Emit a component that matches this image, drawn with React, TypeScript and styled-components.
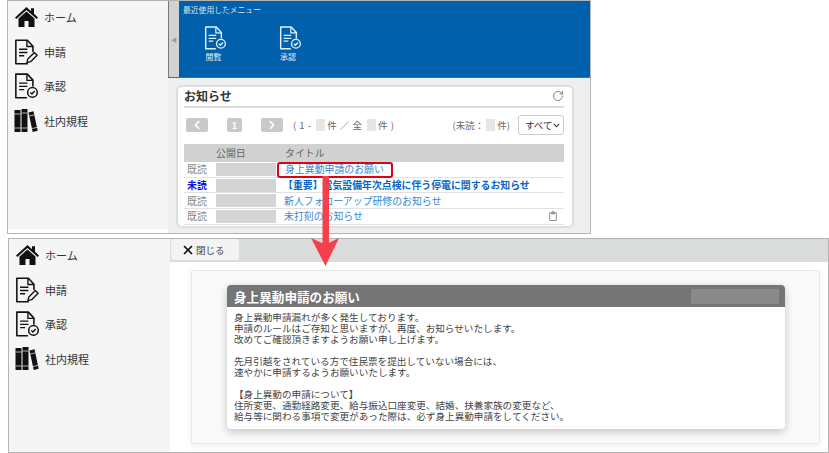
import React from "react";
import styled, { createGlobalStyle } from "styled-components";
import { FaChevronLeft, FaChevronRight, FaChevronDown, FaRegClipboard } from "react-icons/fa";
import { RotateCw, X } from "lucide-react";

const GlobalStyle = createGlobalStyle`
  html, body {
    margin: 0;
    padding: 0;
    background: #fff;
    font-family: "Noto Sans CJK JP", "Liberation Sans", sans-serif;
    color: #444;
  }
  * { box-sizing: border-box; }
`;

const Page = styled.div`
  position: relative;
  width: 829px;
  height: 453px;
  overflow: hidden;
  display: flex;
  flex-direction: column;
  gap: 4px;
`;

const Frame = styled.div<{ $w: number; $h: number; $left: number }>`
  display: flex;
  width: ${(p) => p.$w}px;
  height: ${(p) => p.$h}px;
  margin-left: ${(p) => p.$left}px;
  border: 1px solid #b4b4b4;
  flex-shrink: 0;
`;

const Sidebar = styled.nav<{ $w: number; $bottomGap: number }>`
  width: ${(p) => p.$w}px;
  flex-shrink: 0;
  background: #f5f5f5;
  padding: 0 0 0 6px;
  margin-bottom: ${(p) => p.$bottomGap}px;
  display: flex;
  flex-direction: column;
`;

const NavItem = styled.div`
  height: 34.7px;
  padding-bottom: 3px;
  display: flex;
  align-items: center;
  gap: 6px;
  font-size: 11px;
  color: #333;
`;

const NavIcon = styled.div`
  width: 24px;
  height: 26px;
  display: flex;
  align-items: center;
  justify-content: center;
  color: #111;
  flex-shrink: 0;
`;

const TopMain = styled.div`
  flex: 1;
  background: #efefef;
  display: flex;
  flex-direction: column;
`;

const Strip = styled.div`
  height: 77px;
  display: flex;
  border-bottom: 1px solid #666;
`;

const Collapse = styled.div`
  width: 11px;
  background: #d2d2d2;
  border-left: 1px solid #777;
  display: flex;
  align-items: center;
  justify-content: center;
  color: #9a9a9a;
  font-size: 6px;
`;

const BluePanel = styled.div`
  flex: 1;
  background: #0060ac;
  color: #d6e6f4;
  padding: 3px 0 0 4px;
`;

const PanelTitle = styled.div`
  font-size: 7.8px;
  line-height: 11px;
`;

const Shortcuts = styled.div`
  display: flex;
  margin-top: 11px;
  padding-left: 21px;
  gap: 52.5px;
`;

const Shortcut = styled.div`
  width: 22px;
  display: flex;
  flex-direction: column;
  align-items: center;
  color: #e6eff7;
  font-size: 8px;
  line-height: 10px;
  gap: 2px;
`;

const ShortcutLabel = styled.span`
  margin-left: -3px;
  white-space: nowrap;
`;

const Card = styled.section`
  margin: 7px 16px 0 8px;
  height: 143px;
  background: #fff;
  border: 2px solid #dedede;
  border-radius: 6px;
  padding: 0 8px 0 6px;
`;

const CardHead = styled.div`
  height: 21px;
  padding: 0 0 2px 0;
  display: flex;
  align-items: center;
  justify-content: space-between;
  border-bottom: 2px solid #dcdcdc;
  color: #666;
`;

const CardTitle = styled.h2`
  margin: 0;
  font-size: 12px;
  font-weight: 700;
  color: #333;
`;

const Pager = styled.div`
  height: 36px;
  display: flex;
  align-items: center;
  padding: 0 0 2px 2px;
  font-size: 9.5px;
  color: #666;
`;

const PageButton = styled.div<{ $w: number; $gap: number }>`
  width: ${(p) => p.$w}px;
  height: 14px;
  margin-right: ${(p) => p.$gap}px;
  border-radius: 2px;
  background: #c9c9c9;
  color: #fff;
  font-size: 9px;
  font-weight: 700;
  display: flex;
  align-items: center;
  justify-content: center;
`;

const Blank = styled.span`
  display: inline-block;
  width: 9px;
  height: 12px;
  margin: 0 2px;
  vertical-align: -2px;
  background: #e6e6e6;
`;

const PageCount = styled.div`
  flex: 1;
  white-space: pre;
  word-spacing: 1px;
`;

const Select = styled.div`
  width: 46px;
  height: 20px;
  margin-left: 8px;
  border: 1px solid #ccc;
  border-radius: 3px;
  display: flex;
  align-items: center;
  justify-content: space-between;
  padding: 0 3px 0 6px;
  font-size: 9.5px;
  color: #333;
`;

const TableRow = styled.div<{ $head?: boolean }>`
  display: grid;
  grid-template-columns: 32px 60px 1fr;
  height: ${(p) => (p.$head ? 18 : 15.7)}px;
  align-items: center;
  font-size: 9.9px;
  background: ${(p) => (p.$head ? "#d1d1d1" : "#fff")};
  color: #666;
  border-bottom: ${(p) => (p.$head ? "none" : "1px solid #e2e2e2")};
  position: relative;
`;

const Status = styled.span<{ $unread?: boolean }>`
  padding-left: 3px;
  color: ${(p) => (p.$unread ? "#1414d8" : "#8a8a8a")};
  font-weight: ${(p) => (p.$unread ? 700 : 400)};
`;

const DateBar = styled.span`
  height: 13px;
  background: #d4d4d4;
`;

const ColumnTitle = styled.span`
  padding-left: 9px;
`;

const TitleLink = styled.a<{ $bold?: boolean; $shift: number }>`
  padding-left: ${(p) => p.$shift}px;
  color: ${(p) => (p.$bold ? "#0a63c4" : "#3a86cf")};
  font-weight: ${(p) => (p.$bold ? 700 : 400)};
  white-space: nowrap;
`;

const Trash = styled.div`
  position: absolute;
  right: 6px;
  top: 2px;
  color: #8c8c8c;
  font-size: 10px;
  line-height: 10px;
`;

const BottomMain = styled.div`
  flex: 1;
  display: flex;
  flex-direction: column;
  background: #fff;
`;

const TabBar = styled.div`
  height: 23px;
  background: #dadcdc;
  flex-shrink: 0;
`;

const CloseTab = styled.div`
  width: 68px;
  height: 21px;
  margin-left: 1px;
  background: #f3f3f3;
  border-radius: 2px;
  display: flex;
  align-items: center;
  gap: 1px;
  padding-left: 10px;
  font-size: 9.5px;
  color: #444;
`;

const Outer = styled.div`
  margin: 8px 8px 0 21px;
  height: 174px;
  background: #fafafa;
  border: 1px solid #e8e8e8;
  border-radius: 2px;
  box-shadow: 0 3px 8px rgba(0, 0, 0, 0.06);
  padding: 14px 34px 0 35px;
`;

const Notice = styled.article`
  height: 144px;
  background: #fff;
  border-radius: 4px;
  box-shadow: 0 3px 10px rgba(0, 0, 0, 0.22);
  overflow: hidden;
`;

const NoticeHead = styled.header`
  height: 22px;
  background: #757575;
  display: flex;
  align-items: center;
  justify-content: space-between;
  padding: 0 6px 0 7px;
`;

const NoticeTitle = styled.h1`
  margin: 0;
  font-size: 12.6px;
  font-weight: 700;
  color: #fff;
`;

const NoticeDate = styled.div`
  width: 88px;
  height: 15px;
  background: #8a8a8a;
`;

const NoticeBody = styled.p`
  margin: 0;
  padding: 5px 0 0 7px;
  font-size: 9.6px;
  line-height: 11px;
  color: #444;
  white-space: pre;
`;

const Highlight = styled.div`
  position: absolute;
  left: 277px;
  top: 162px;
  width: 116px;
  height: 16px;
  border: 2px solid #e00012;
  border-radius: 3px;
`;

const ArrowMark = styled.svg`
  position: absolute;
  left: 310px;
  top: 176px;
`;

const DocLines = () => (
  <>
    <path d="M14 1.5v6.5h6.5" fill="none" stroke="currentColor" strokeWidth="1.5" />
    <path d="M5.5 11h9M5.5 14.5h9M5.5 18h5.5" stroke="currentColor" strokeWidth="1.5" fill="none" />
  </>
);

const DocCheck = ({ size = 24 }: { size?: number }) => (
  <svg width={size} height={(size * 28) / 26} viewBox="0 0 26 28">
    <path
      d="M14 26.8H2V1.2h12.5l6 6.5v7"
      fill="none"
      stroke="currentColor"
      strokeWidth="1.7"
      strokeLinejoin="round"
    />
    <DocLines />
    <circle cx="20" cy="21" r="5.2" fill="none" stroke="currentColor" strokeWidth="1.6" />
    <path d="M17.6 21l1.8 1.8 3-3.3" fill="none" stroke="currentColor" strokeWidth="1.5" />
  </svg>
);

const DocPen = () => (
  <svg width={24} height={26} viewBox="0 0 26 28">
    <path
      d="M15 26.8H2V1.2h12.5l6 6.5v6.3"
      fill="none"
      stroke="currentColor"
      strokeWidth="1.7"
      strokeLinejoin="round"
    />
    <DocLines />
    <path d="M14 25.5l1-4 7-7 3 3-7 7z" fill="none" stroke="currentColor" strokeWidth="1.5" strokeLinejoin="round" />
  </svg>
);

const House = () => (
  <svg width={23} height={20} viewBox="0 0 23 20" fill="currentColor">
    <path d="M11.5 0L0 10.4l1.4 1.5L11.5 3l10.1 8.9 1.4-1.5-4-3.6V1.2h-3v3.1z" />
    <path d="M11.5 4.6L3.5 11.6V20h6v-6h4v6h6v-8.4z" />
  </svg>
);

const Books = () => (
  <svg width={24} height={24} viewBox="0 0 24 24" fill="currentColor">
    <rect x="0.5" y="1" width="6" height="22" rx="0.5" />
    <rect x="7.5" y="0" width="6" height="23" rx="0.5" />
    <path d="M14.5 3.5l5-1.2 4.2 19.5-5 1.2z" />
    <path d="M0.5 5h6M7.5 4h6M0.5 19h6M7.5 19h6M15.2 7l5-1.1M18 19.5l5-1.1" stroke="#f5f5f5" strokeWidth="0.7" />
  </svg>
);

const navItems = [
  { label: "ホーム", icon: <House /> },
  { label: "申請", icon: <DocPen /> },
  { label: "承認", icon: <DocCheck /> },
  { label: "社内規程", icon: <Books /> },
];

const Nav = ({ w, bottomGap }: { w: number; bottomGap: number }) => (
  <Sidebar $w={w} $bottomGap={bottomGap}>
    {navItems.map((item) => (
      <NavItem key={item.label}>
        <NavIcon>{item.icon}</NavIcon>
        {item.label}
      </NavItem>
    ))}
  </Sidebar>
);

const rows = [
  { status: "既読", title: "身上異動申請のお願い", shift: 9 },
  { status: "未読", title: "【重要】電気設備年次点検に伴う停電に関するお知らせ", unread: true, shift: 7 },
  { status: "既読", title: "新人フォローアップ研修のお知らせ", shift: 8 },
  { status: "既読", title: "未打刻のお知らせ", shift: 8, trash: true },
];

const noticeText = `身上異動申請漏れが多く発生しております。
申請のルールはご存知と思いますが、再度、お知らせいたします。
改めてご確認頂きますようお願い申し上げます。

先月引越をされている方で住民票を提出していない場合には、
速やかに申請するようお願いいたします。

【身上異動の申請について】
住所変更、通勤経路変更、給与振込口座変更、結婚、扶養家族の変更など、
給与等に関わる事項で変更があった際は、必ず身上異動申請をしてください。`;

export default function App() {
  return (
    <Page>
      <GlobalStyle />
      <Frame $w={584} $h={234} $left={7}>
        <Nav w={160} bottomGap={4} />
        <TopMain>
          <Strip>
            <Collapse>◀</Collapse>
            <BluePanel>
              <PanelTitle>最近使用したメニュー</PanelTitle>
              <Shortcuts>
                <Shortcut>
                  <DocCheck size={22} />
                  <ShortcutLabel>閲覧</ShortcutLabel>
                </Shortcut>
                <Shortcut>
                  <DocCheck size={22} />
                  <ShortcutLabel>承認</ShortcutLabel>
                </Shortcut>
              </Shortcuts>
            </BluePanel>
          </Strip>
          <Card>
            <CardHead>
              <CardTitle>お知らせ</CardTitle>
              <RotateCw size={12} strokeWidth={1.6} />
            </CardHead>
            <Pager>
              <PageButton $w={22} $gap={19}>
                <FaChevronLeft size={10} />
              </PageButton>
              <PageButton $w={15} $gap={19}>1</PageButton>
              <PageButton $w={22} $gap={10}>
                <FaChevronRight size={10} />
              </PageButton>
              <PageCount>
                ( 1 - <Blank />件 ／ 全 <Blank />件 )
              </PageCount>
              <span>
                (未読：<Blank />件)
              </span>
              <Select>
                すべて
                <FaChevronDown size={7} />
              </Select>
            </Pager>
            <TableRow $head>
              <span />
              <span>公開日</span>
              <ColumnTitle>タイトル</ColumnTitle>
            </TableRow>
            {rows.map((row) => (
              <TableRow key={row.title}>
                <Status $unread={row.unread}>{row.status}</Status>
                <DateBar />
                <TitleLink $bold={row.unread} $shift={row.shift}>{row.title}</TitleLink>
                {row.trash && (
                  <Trash>
                    <FaRegClipboard />
                  </Trash>
                )}
              </TableRow>
            ))}
          </Card>
        </TopMain>
      </Frame>
      <Frame $w={821} $h={215} $left={8}>
        <Nav w={161} bottomGap={0} />
        <BottomMain>
          <TabBar>
            <CloseTab>
              <X size={14} strokeWidth={3} color="#111" />
              閉じる
            </CloseTab>
          </TabBar>
          <Outer>
            <Notice>
              <NoticeHead>
                <NoticeTitle>身上異動申請のお願い</NoticeTitle>
                <NoticeDate />
              </NoticeHead>
              <NoticeBody>{noticeText}</NoticeBody>
            </Notice>
          </Outer>
        </BottomMain>
      </Frame>
      <Highlight />
      <ArrowMark width="30" height="92" viewBox="0 0 30 92">
        <rect x="12.5" y="0" width="6.5" height="70" fill="#f4404a" />
        <path d="M1 62l14.5 6.5L29 62 15.5 90z" fill="#f4404a" />
      </ArrowMark>
    </Page>
  );
}
